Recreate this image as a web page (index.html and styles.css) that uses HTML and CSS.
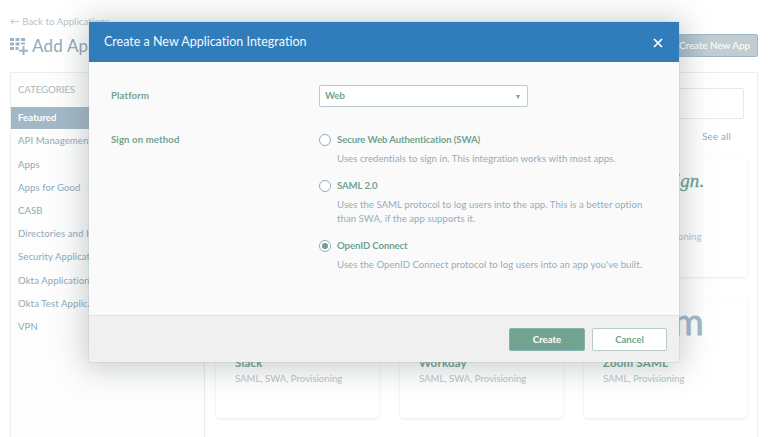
FILE: index.html
```html
<!DOCTYPE html>
<html lang="en">
<head>
<meta charset="utf-8">
<title>Add Application</title>
<link rel="stylesheet" href="styles.css">
</head>
<body>
<div class="page">
  <a class="back">← Back to Applications</a>
  <header class="top">
    <svg class="grid-icon" width="19" height="18" viewBox="0 0 19 18"><path d="M0 0h4v3H0zM5.500 0h4v3h-4zM11 0h4v3h-4zM0 4.500h4v3H0zM5.500 4.500h4v3h-4zM11 4.500h4v2h-4zM0 9h4v3H0zM5.500 9h3v3h-3zM12.500 8h2v3.700H18v2h-3.500V17h-2v-3.300H9v-2h3.500z"/></svg>
    <h1>Add Application</h1>
    <button class="new-app">Create New App</button>
  </header>
  <div class="panel">
    <nav class="side">
      <h2>CATEGORIES</h2>
      <a class="active">Featured</a>
      <a>API Management</a>
      <a>Apps</a>
      <a>Apps for Good</a>
      <a>CASB</a>
      <a>Directories and HR Systems</a>
      <a>Security Applications</a>
      <a>Okta Applications</a>
      <a>Okta Test Applications</a>
      <a>VPN</a>
    </nav>
    <main class="catalog">
      <div class="search"></div>
      <div class="see">See all</div>
      <div class="cards">
        <div class="card"></div>
        <div class="card"></div>
        <div class="card"><div class="logo sign">DocuSign.</div><b>DocuSign</b><span class="sub3">SAML, Provisioning</span></div>
        <div class="card"><div class="logo"></div><b>Slack</b><span>SAML, SWA, Provisioning</span></div>
        <div class="card"><div class="logo"></div><b>Workday</b><span>SAML, SWA, Provisioning</span></div>
        <div class="card"><div class="logo zoom">zoom</div><b>Zoom SAML</b><span>SAML, Provisioning</span></div>
      </div>
    </main>
  </div>
</div>
<section class="modal">
  <header class="modal-head">
    <h3>Create a New Application Integration</h3>
    <svg width="10" height="10" viewBox="0 0 10 10"><path d="M1 1l8 8M9 1l-8 8"/></svg>
  </header>
  <div class="modal-body">
    <div class="field">
      <label class="name">Platform</label>
      <div class="select"><span>Web</span><i></i></div>
    </div>
    <div class="field methods">
      <label class="name">Sign on method</label>
      <div class="options">
        <div class="option"><i class="radio"></i><div><b>Secure Web Authentication (SWA)</b><p>Uses credentials to sign in. This integration works with most apps.</p></div></div>
        <div class="option"><i class="radio"></i><div><b>SAML 2.0</b><p>Uses the SAML protocol to log users into the app. This is a better option<br>than SWA, if the app supports it.</p></div></div>
        <div class="option"><i class="radio on"></i><div><b>OpenID Connect</b><p>Uses the OpenID Connect protocol to log users into an app you've built.</p></div></div>
      </div>
    </div>
  </div>
  <footer class="modal-foot">
    <button class="create">Create</button>
    <button class="cancel">Cancel</button>
  </footer>
</section>
</body>
</html>
```
FILE: styles.css
```css
* { box-sizing: border-box; }
body { margin: 0; width: 768px; height: 437px; overflow: hidden; background: #fff; font-family: Lato, "Liberation Sans", sans-serif; font-variant-ligatures: none; font-size: 9.600px; color: #8fa9b9; }
h1, h2, h3, p { margin: 0; font-weight: 400; }
button { font-family: inherit; padding: 0; }
.page { padding: 15px 10px 0; height: 437px; overflow: hidden; }
.back { display: block; height: 13px; line-height: 13px; color: #b6c2c9; letter-spacing: .08px; }
.top { display: flex; align-items: flex-start; height: 44px; padding-top: 6px; }
.grid-icon { fill: #9cb4c5; margin-top: 4px; }
.top h1 { margin-left: 3px; font-size: 17px; line-height: 24px; color: #91aaba; letter-spacing: .2px; }
.new-app { margin: 0 0 0 auto; width: 87px; height: 23px; padding: 0 0 1px; border: 1px solid #9fb7c8; border-radius: 2px; background: linear-gradient(90deg, #9db7cb, #c1cdd1 40%); color: #fff; font-size: 9.800px; font-weight: 500; }
.panel { display: flex; width: 748px; height: 400px; border: 1px solid #eceeee; border-bottom: 0; }
.side { width: 194px; background: #fdfdfd; border-right: 1px solid #ececec; }
.side h2 { height: 34px; padding-left: 7px; line-height: 32px; font-size: 9.700px; letter-spacing: -.1px; color: #a8b8c2; }
.side a { display: block; padding-left: 7px; height: 23.200px; line-height: 23.200px; white-space: nowrap; letter-spacing: .08px; }
.side .active { height: 22px; line-height: 22px; margin-bottom: .4px; background: #a3b8c6; color: #fff; font-weight: 700; }
.catalog { flex: 1; padding: 15px 10px 0 11px; }
.search { height: 31px; margin-right: 3px; border: 1px solid #e5e9e9; border-radius: 2px; }
.see { text-align: right; height: 38px; padding: 11px 16px 0 0; line-height: 13px; letter-spacing: .25px; }
.cards { display: grid; grid-template-columns: repeat(3, 163px); grid-auto-rows: 119.500px; gap: 22px 21px; }
.card { padding-left: 19px; border-radius: 3px; box-shadow: 0 1px 3px rgba(0,0,0,.1); background: #fff; overflow: hidden; }
.logo { height: 56px; line-height: 42px; white-space: nowrap; }
.card b { display: block; font-size: 11.500px; line-height: 16px; color: #70a291; letter-spacing: .2px; }
.card span { display: block; line-height: 16px; color: #b5c5ca; }
.card .sub3 { padding-left: 17px; }
.sign { padding-left: 20px; line-height: 47px; font-family: "Liberation Serif", serif; font-style: italic; font-size: 19px; color: #70a291; -webkit-text-stroke: .3px #70a291; letter-spacing: .2px; }
.zoom { font-size: 37px; line-height: 44px; color: #a1b9ca; -webkit-text-stroke: .8px #a1b9ca; padding-left: 12px; }
.modal { position: absolute; left: 89px; top: 22px; width: 590px; height: 340px; display: flex; flex-direction: column; background: #fafafa; box-shadow: 0 2px 28px 5px rgba(75,90,90,.28), 0 0 1px #a8baba; }
.modal-head { height: 40px; padding: 0 16px 0 15px; display: flex; align-items: center; justify-content: space-between; background: #317dbc; color: #f4f8fc; }
.modal-head h3 { font-size: 12.500px; padding-bottom: 1px; }
.modal-head svg { fill: none; stroke: #fff; stroke-width: 1.700; margin-top: 2px; }
.modal-body { flex: 1; padding: 23px 22px 0; color: #94adbb; }
.field { display: flex; }
.name { width: 208px; line-height: 22px; font-weight: 700; color: #71a390; letter-spacing: .12px; }
.select { width: 209px; height: 22px; display: flex; justify-content: space-between; align-items: center; padding: 0 7px 0 5px; border: 1px solid #b9cccb; border-radius: 2px; background: #fff; color: #71a390; font-weight: 700; }
.select i { border: 2.500px solid transparent; border-top: 4px solid #71a390; border-bottom: 0; margin-top: 2px; }
.select span { padding-bottom: 1px; }
.methods { margin-top: 26px; }
.methods .name { line-height: 14px; }
.option { display: flex; gap: 6px; }
.option b { display: block; height: 14px; line-height: 14px; color: #71a390; letter-spacing: -.1px; }
.option p { padding-top: 5px; line-height: 13.300px; margin-bottom: 14px; white-space: nowrap; letter-spacing: .05px; }
.radio { width: 12px; height: 12px; margin-top: 1px; border: 1px solid #91adbd; border-radius: 50%; background: #fff; }
.on { background: radial-gradient(circle, #71a390 0 2.800px, #fff 3.300px); }
.modal-foot { height: 47px; border-top: 1px solid #dfe2e2; background: #f0f0f0; display: flex; justify-content: flex-end; align-items: center; gap: 7px; padding-right: 12px; }
.modal-foot button { font-size: 9.600px; font-weight: 700; border-radius: 2px; }
.create { width: 76px; height: 23px; background: #73a491; color: #fff; border: 1px solid #8aafb0; }
.cancel { width: 75px; height: 23px; background: #fff; color: #71a390; border: 1px solid #b9caca; }
```
